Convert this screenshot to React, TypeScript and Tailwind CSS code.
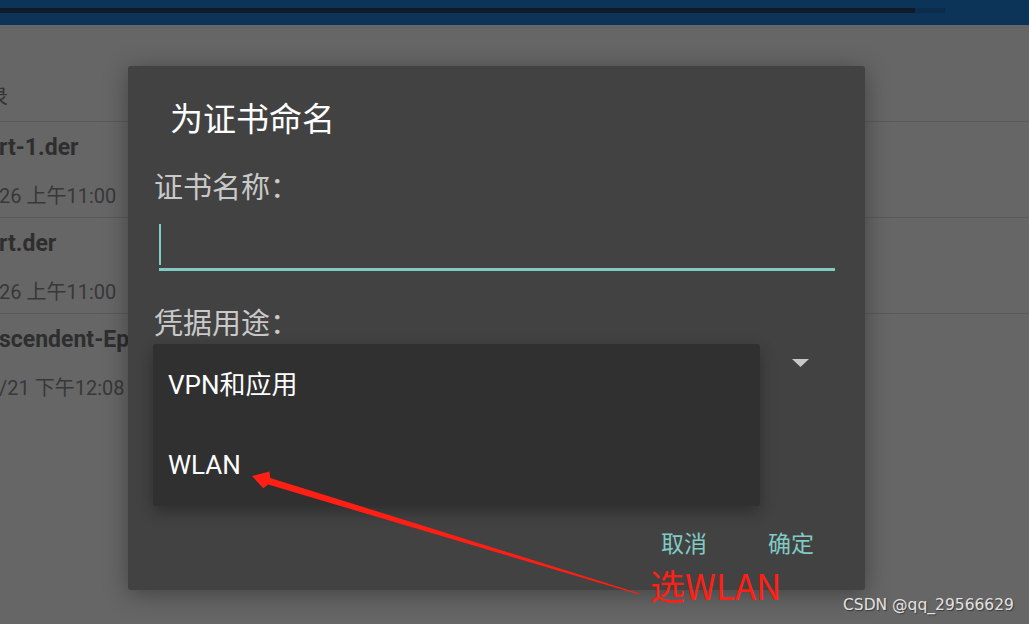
import React from "react";

const rows = [
  { name: "rt-1.der", date: "26 上午11:00" },
  { name: "rt.der", date: "26 上午11:00" },
  { name: "scendent-Ep", date: "/21 下午12:08" },
];

function AnnotationArrow() {
  return (
    <svg className="pointer-events-none absolute left-0 top-0" width="1029" height="624" viewBox="0 0 1029 624">
      <polygon
        points="252,476 269.5,471.5 270.2,477.9 639.5,593.4 639,594.6 268.2,484.6 263.3,488.3"
        fill="#ff1f14"
      />
    </svg>
  );
}

export default function App() {
  return (
    <div
      className="relative h-[624px] w-[1029px] overflow-hidden bg-[#666666]"
      style={{ fontFamily: "Roboto, 'Noto Sans CJK SC', sans-serif" }}
    >
      {/* status / progress bar */}
      <div className="h-[25px] bg-[#0c3358] pt-[8px]">
        <div className="flex h-[5px]">
          <div className="w-[915px] bg-[#111a2b]" />
          <div className="w-[30px] bg-[#0d2b4b]" />
        </div>
      </div>

      {/* file list behind the dialog */}
      <div className="flex h-[96px] items-end pb-[10px]">
        <span className="ml-[-12px] text-[20px] leading-[28px] text-[#333333]">录</span>
      </div>
      {rows.map((r) => (
        <div key={r.name} className="h-[96px] border-t border-[#595959] pt-[12px]">
          <div className="ml-[-1px] text-[23px] font-bold leading-[28px] text-[#2e2e2e]">{r.name}</div>
          <div className="mt-[20px] ml-[-1px] text-[20px] leading-[28px] text-[#383838]">{r.date}</div>
        </div>
      ))}

      {/* dialog */}
      <div className="absolute left-[128px] top-[66px] flex h-[524px] w-[737px] flex-col rounded-[3px] bg-[#424242] shadow-[0_4px_24px_rgba(0,0,0,0.35)]">
        <div className="pl-[42px] pt-[34px] text-[33px] leading-[40px] text-white">为证书命名</div>

        <div className="mt-[30px] pl-[26px] text-[29px] leading-[36px] text-[#c9c9c9]">证书名称：</div>
        <div className="ml-[31px] mr-[30px] mt-[18px] h-[47px] border-b-[3px] border-[#80cbc4]">
          <div className="h-[41px] w-[2px] bg-[#80cbc4]" />
        </div>

        <div className="mt-[35px] pl-[26px] text-[29px] leading-[36px] text-[#c9c9c9]">凭据用途：</div>
        <div className="flex h-[48px] justify-end pr-[56px] pt-[17px]">
          <svg width="17" height="8" viewBox="0 0 17 8">
            <polygon points="0,0 17,0 8.5,8" fill="#c8c8c8" />
          </svg>
        </div>

        <div className="mt-auto mb-[29px] flex gap-[61px] pl-[533px] text-[23px] leading-[32px] text-[#80cbc4]">
          <span>取消</span>
          <span>确定</span>
        </div>

        {/* opened spinner popup */}
        <div className="absolute left-[25px] top-[278px] w-[607px] rounded-[3px] bg-[#303030] py-[1px] shadow-[0_6px_16px_rgba(0,0,0,0.3)]">
          <div className="flex h-[80px] items-center pl-[15px] text-[26px] text-white">VPN和应用</div>
          <div className="flex h-[80px] items-center pl-[15px] text-[26px] text-white">WLAN</div>
        </div>
      </div>

      <AnnotationArrow />
      <div
        className="absolute left-[650px] top-[565px] text-[35px] leading-[40px] text-[#ff1f14]"
        style={{ fontFamily: "'Noto Sans CJK SC', sans-serif" }}
      >
        选WLAN
      </div>

      <div
        className="absolute left-[843px] top-[595px] text-[15.5px] leading-[20px] text-[#e2e2e2] [text-shadow:1px_1px_1px_rgba(0,0,0,0.45)]"
        style={{ fontFamily: "'DejaVu Sans', sans-serif" }}
      >
        CSDN @qq_29566629
      </div>
    </div>
  );
}
